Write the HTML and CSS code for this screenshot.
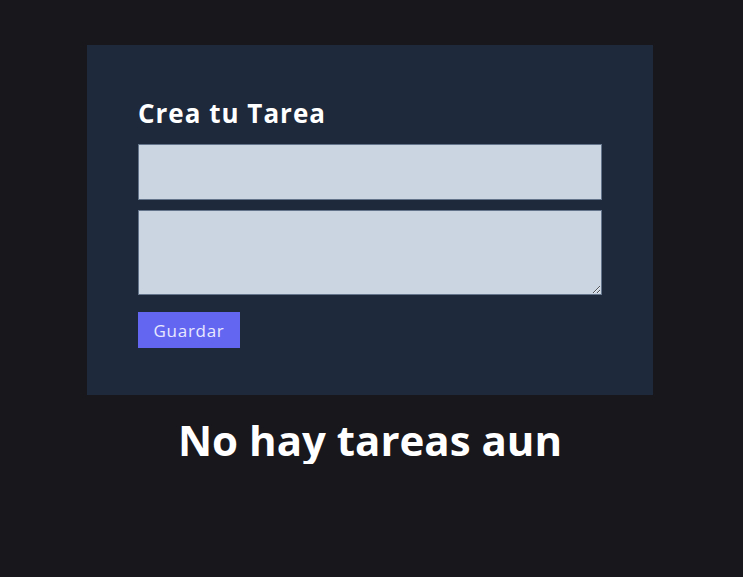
FILE: index.html
```html
<!DOCTYPE html>
<html lang="es">
<head>
<meta charset="utf-8">
<title>Tareas</title>
<link rel="stylesheet" href="styles.css">
</head>
<body>
<main class="page">
  <form class="card">
    <h1 class="card-title">Crea tu Tarea</h1>
    <input class="field" type="text">
    <textarea class="field area"></textarea>
    <button class="btn" type="button">Guardar</button>
  </form>
  <h2 class="empty">No hay tareas aun</h2>
</main>
</body>
</html>
```

FILE: styles.css
```css
* { box-sizing: border-box; }
html, body {
  margin: 0;
  background: #18171c;
  font-family: "Open Sans", "Noto Sans", sans-serif;
  color: #fff;
}
.page {
  display: flex;
  flex-direction: column;
  align-items: center;
  padding: 45px 3px 0 0;
}
.card {
  width: 566px;
  background: #1e293b;
  padding: 51px 51px 47px;
  display: flex;
  flex-direction: column;
  align-items: flex-start;
}
.card-title {
  margin: 0 0 14px;
  font-size: 26px;
  line-height: 34px;
  font-weight: 700;
  letter-spacing: 1px;
}
.field {
  width: 100%;
  display: block;
  background: #cbd5e1;
  border: 1px solid #64748b;
  border-radius: 0;
  margin: 0 0 10px;
  height: 56px;
  font: inherit;
}
.area {
  height: 85px;
  margin-bottom: 17px;
  resize: both;
}
.btn {
  background: #6366f1;
  color: #e8e8ff;
  border: none;
  font: inherit;
  font-size: 17px;
  letter-spacing: 0.7px;
  height: 36px;
  width: 102px;
  padding: 0;
  cursor: pointer;
}
.empty {
  margin: 21px 0 0;
  font-size: 42px;
  line-height: 48px;
  font-weight: 700;
  letter-spacing: 0;
}
```
